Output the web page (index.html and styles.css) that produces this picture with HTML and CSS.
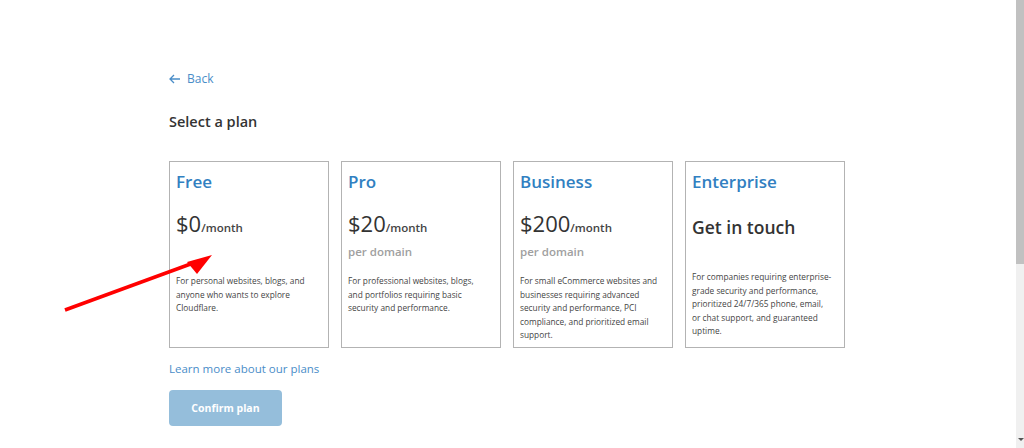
FILE: index.html
```html
<!DOCTYPE html>
<html lang="en">
<head>
  <meta charset="UTF-8">
  <meta name="viewport" content="width=device-width, initial-scale=1.0">
  <title>Select a plan</title>
  <link rel="stylesheet" href="styles.css">
</head>
<body>
  <!-- contenu principal -->
  <div class="page">
    <a class="back" href="#">
      <svg width="12" height="10" viewBox="0 0 12 10"><path d="M5 1 L1 5 L5 9 M1 5 H11" fill="none" stroke="currentColor" stroke-width="1.3"/></svg>
      Back
    </a>

    <h1 class="title">Select a plan</h1>

    <div class="plans">
      <div class="plan">
        <h2>Free</h2>
        <div class="price">$0<span>/month</span></div>
        <div class="per"></div>
        <p>For personal websites, blogs, and anyone who wants to explore Cloudflare.</p>
      </div>
      <div class="plan">
        <h2>Pro</h2>
        <div class="price">$20<span>/month</span></div>
        <div class="per">per domain</div>
        <p>For professional websites, blogs, and portfolios requiring basic security and performance.</p>
      </div>
      <div class="plan">
        <h2>Business</h2>
        <div class="price">$200<span>/month</span></div>
        <div class="per">per domain</div>
        <p>For small eCommerce websites and businesses requiring advanced security and performance, PCI compliance, and prioritized email support.</p>
      </div>
      <div class="plan enterprise">
        <h2>Enterprise</h2>
        <div class="price">Get in touch</div>
        <p>For companies requiring enterprise-grade security and performance, prioritized 24/7/365 phone, email, or chat support, and guaranteed uptime.</p>
      </div>
    </div>

    <a class="learn" href="#">Learn more about our plans</a>
    <button class="confirm" disabled>Confirm plan</button>
  </div>

  <!-- fleche rouge ajoutee sur la capture -->
  <svg class="annotation" width="230" height="330" viewBox="0 0 230 330">
    <line x1="65" y1="310" x2="196" y2="262" stroke="#f00" stroke-width="3.5"/>
    <polygon points="212,255 187,262 197,274" fill="#f00"/>
  </svg>

  <!-- barre de defilement -->
  <div class="scrollbar">
    <div class="thumb"></div>
    <div class="down"></div>
  </div>
</body>
</html>
```

FILE: styles.css
```css
body {
  margin: 0;
  font-family: "Open Sans", "Noto Sans", sans-serif;
  color: #333;
  background-color: #fff;
  height: 448px;
  overflow: hidden;
}

.page {
  padding: 71px 0 0 169px;
  display: flex;
  flex-direction: column;
  align-items: flex-start;
}

.back {
  display: flex;
  align-items: center;
  gap: 6px;
  font-size: 12px;
  line-height: 16px;
  color: #4a8dc8;
  text-decoration: none;
}

.title {
  margin: 25px 0 0 0;
  font-size: 14.5px;
  line-height: 20px;
  font-weight: 600;
  color: #333;
}

/* cartes des offres */
.plans {
  display: flex;
  gap: 12px;
  margin-top: 29px;
}

.plan {
  width: 160px;
  height: 187px;
  box-sizing: border-box;
  border: 1px solid #b3b3b3;
  padding: 8px 12px 8px 6px;
  display: flex;
  flex-direction: column;
}

.plan h2 {
  margin: 0;
  font-size: 17px;
  line-height: 24px;
  font-weight: 600;
  color: #3180c1;
}

.price {
  margin-top: 15px;
  font-size: 22px;
  line-height: 28px;
  color: #333;
}

.price span {
  font-size: 11.5px;
  font-weight: 600;
  color: #444;
}

.per {
  margin-top: 2px;
  height: 16px;
  font-size: 11.5px;
  line-height: 16px;
  font-weight: 600;
  color: #a0a0a0;
}

.plan p {
  margin: 14px 0 0 0;
  font-size: 8.3px;
  line-height: 13.6px;
  color: #444;
}

.enterprise .price {
  font-size: 17.5px;
  font-weight: 600;
  margin-top: 19px;
}

.enterprise p {
  margin-top: 29px;
}

.learn {
  margin-top: 13px;
  font-size: 11.5px;
  line-height: 16px;
  color: #4a8dc8;
  text-decoration: none;
}

.confirm {
  margin-top: 13px;
  width: 113px;
  height: 36px;
  border: none;
  border-radius: 4px;
  background-color: #95bedb;
  color: #fff;
  font-family: "Open Sans", sans-serif;
  font-size: 10.5px;
  font-weight: 700;
}

.annotation {
  position: absolute;
  left: 0;
  top: 0;
}

.scrollbar {
  position: fixed;
  top: 0;
  right: 0;
  width: 8px;
  height: 448px;
  background-color: #f0f0f0;
}

.thumb {
  height: 264px;
  background-color: #c1c1c1;
}

.down {
  position: absolute;
  left: 2px;
  bottom: 7px;
  width: 0;
  height: 0;
  border-left: 3px solid transparent;
  border-right: 3px solid transparent;
  border-top: 3px solid #555;
}
```
